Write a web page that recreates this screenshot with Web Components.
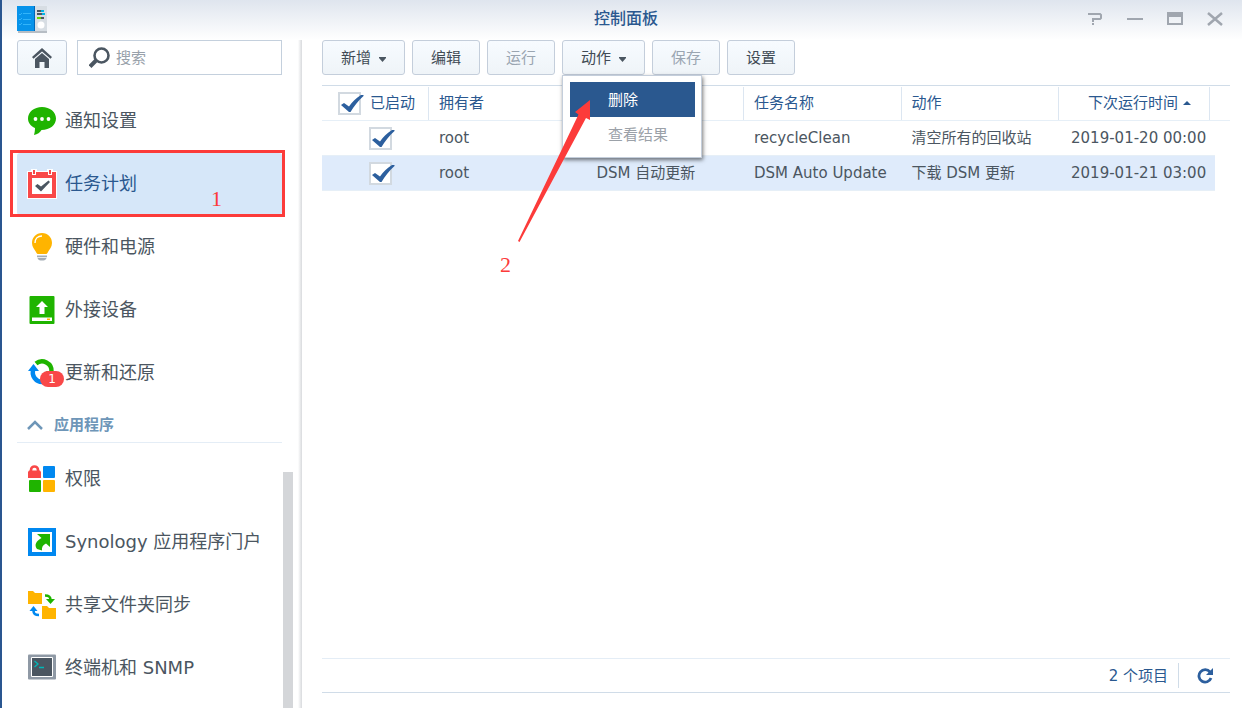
<!DOCTYPE html>
<html lang="zh-CN">
<head>
<meta charset="utf-8">
<title>控制面板</title>
<style>
html, body { margin: 0; min-height: 100%; }
body { background: #fff; color: #4b5661; font: 15px/20px "DejaVu Sans", "Noto Sans CJK SC", sans-serif; overflow: hidden; }
</style>
</head>
<body>
<cp-window heading="控制面板">
  <cp-sidebar slot="sidebar">
    <cp-nav-item icon="chat">通知设置</cp-nav-item>
    <cp-nav-item icon="calendar" selected mark="1">任务计划</cp-nav-item>
    <cp-nav-item icon="bulb">硬件和电源</cp-nav-item>
    <cp-nav-item icon="drive">外接设备</cp-nav-item>
    <cp-nav-item icon="update" badge="1">更新和还原</cp-nav-item>
    <cp-nav-section>应用程序</cp-nav-section>
    <cp-nav-item icon="apps">权限</cp-nav-item>
    <cp-nav-item icon="portal">Synology 应用程序门户</cp-nav-item>
    <cp-nav-item icon="sync">共享文件夹同步</cp-nav-item>
    <cp-nav-item icon="terminal">终端机和 SNMP</cp-nav-item>
  </cp-sidebar>
  <cp-toolbar>
    <cp-button caret>新增</cp-button>
    <cp-button>编辑</cp-button>
    <cp-button disabled>运行</cp-button>
    <cp-button caret>动作<cp-menu slot="menu"></cp-menu></cp-button>
    <cp-button disabled>保存</cp-button>
    <cp-button>设置</cp-button>
  </cp-toolbar>
  <cp-task-table></cp-task-table>
  <cp-status-bar>2 个项目</cp-status-bar>
</cp-window>
<script>
const ICONS = {
  chat: '<path fill="#1fb400" d="M14 0C6 0 0 5 0 11.500c0 4 2.500 7.500 7 9.500 0 3-.5 5-1 7 3.500-.5 6-2.500 7.500-5C22 23 28 18 28 11.500S22 0 14 0z"/><g fill="#fff"><circle cx="7.500" cy="12" r="1.900"/><circle cx="14" cy="12" r="1.900"/><circle cx="20.500" cy="12" r="1.900"/></g>',
  calendar: '<path fill="#fff" d="M-1 1h4v-2h6v2h10v-2h6v2h4v28H-1z"/><path fill="#f94848" d="M0 2h4v3h4V2h12v3h4V2h4v26H0z"/><path fill="#fff" d="M4 8h20v16H4z"/><path fill="#f94848" d="M5 0h2v4H5zM21 0h2v4h-2z"/><path fill="#4b5661" d="M7 16l2.500-2 3.500 2.500 7.500-6 1.500 1.500-9 9.500z"/>',
  bulb: '<path fill="#ffb400" d="M14 0C8 0 4 4.500 4 10c0 4 2.500 6.500 4 9 .7 1.500 1 2 2.500 2h7c1.500 0 1.800-.5 2.500-2 1.500-2.500 4-5 4-9 0-5.500-4-10-10-10z"/><path fill="none" stroke="#fff" stroke-width="1.400" d="M7 10c0-4 2.500-7 7-7"/><path fill="#a4adb5" d="M9 22.500h10v1.800H9zM9.500 25h9c-.5 1.500-1.500 2.500-3 2.500h-3c-1.500 0-2.500-1-3-2.500z"/>',
  drive: '<rect x="1.500" width="25" height="28" rx="1" fill="#1fb400"/><path fill="#fff" d="M14 5l6 6h-3.500v7h-5v-7H8zM4 21.500h20V25H4z"/><path fill="#ffb400" d="M19 22.500h3V24h-3z"/>',
  update: '<path fill="none" stroke="#0088f0" stroke-width="4.500" d="M5.500 10a9.500 9.500 0 0 0 9.500 13"/><path fill="#0088f0" d="M0 12l5.500-7 5.500 7z"/><path fill="none" stroke="#1fb400" stroke-width="4.500" d="M8 4.500a9.500 9.500 0 0 1 15.500 8"/><path fill="#1fb400" d="M18 12h10l-5 7z"/>',
  apps: '<path fill="none" stroke="#f94848" stroke-width="2.600" d="M3 8V5a3.500 3.500 0 0 1 7 0v3"/><path fill="#f94848" d="M1 5.500h11l1 1.500v6H0V7z"/><rect x="15" y="1" width="12" height="12" rx="1" fill="#0088f0"/><rect x="1" y="15" width="12" height="12" rx="1" fill="#1fb400"/><rect x="15" y="15" width="12" height="12" rx="1" fill="#ffb400"/>',
  portal: '<path fill="#fff" stroke="#0088f0" stroke-width="4" d="M2 2h24v24H2z"/><path fill="#1fb400" d="M9 6h13v13l-4-3.500c-3 1.500-4.500 3.500-4 7L9 21c-3-4-1-8 4.500-11z"/>',
  sync: '<path fill="#ffb400" d="M0 0h5l2 2h7v11H0zM14 15h5l2 2h7v11H14z"/><path fill="none" stroke="#1fb400" stroke-width="2.600" d="M17 4.500c4 0 5.500 1 5.500 4.500"/><path fill="#1fb400" d="M18 8h9l-4.500 5z"/><path fill="none" stroke="#0088f0" stroke-width="2.600" d="M11 24c-4 0-5.500-1-5.500-4.500"/><path fill="#0088f0" d="M1.500 20h8l-4-5z"/>',
  terminal: '<rect x="0" y="0.500" width="28" height="25" rx="1" fill="#8f99a5"/><path fill="#4b5661" stroke="#fff" d="M3.500 3.500h21v19h-21z"/><path fill="none" stroke="#00b8b8" stroke-width="1.300" d="M6.500 7l3.500 3-3.500 3M11 13.500h5"/>'
};

function define(name, css, html, setup) {
  const tpl = document.createElement('template');
  tpl.innerHTML = `<style>*{box-sizing:border-box}${css}</style>${html}`;
  customElements.define(name, class extends HTMLElement {
    constructor() {
      super();
      this.attachShadow({ mode: 'open' }).append(tpl.content.cloneNode(true));
    }
    connectedCallback() {
      if (setup && !this.ready) { this.ready = true; setup(this, this.shadowRoot); }
    }
  });
}

define('cp-window', `
  :host { display: flex; flex-direction: column; min-height: 100vh; box-sizing: border-box; border-left: 2px solid #2a5690; }
  header { display: grid; grid-template-columns: 1fr auto 1fr; align-items: center; height: 40px; padding: 0 7px 2px 15px;
    background: linear-gradient(#dfe5ee, #fff); }
  h1 { margin: 0; font-size: 16px; line-height: 24px; font-weight: 500; color: #2a588f; }
  nav { display: flex; justify-content: flex-end; }
  button { display: grid; place-items: center; width: 40px; height: 30px; padding: 0; border: 0; background: none; }
  .body { flex: 1; display: flex; }
  main { flex: 1; min-width: 0; display: flex; flex-direction: column; padding: 0 12px 15px 20px; }
  svg { display: block; fill: none; stroke: #a0a6af; stroke-width: 2; }
`, `
  <header>
    <svg width="30" height="27" stroke="none"><path stroke="none" fill="#b7bdc4" d="M1 2h29v25H1z"/><path stroke="none" fill="#0793ea" d="M0 0h17v25H0z"/><path stroke="none" fill="#0067b8" d="M17 0h1v25h-1z"/><path stroke="none" fill="#d7dde3" d="M18 0h12v25H18z"/>
      <path stroke="#32b4fa" stroke-width="1" d="M2 8l1 1 2-2M6 7.500h8M2 13l1 1 2-2M6 13.500h8M2 18l1 1 2-2M6 18.500h8"/><path stroke="#4b5661" d="M20 5h7M20 8h7M20 12h7"/><path stroke="#00b4e6" d="M24 5h3M25 8h3"/><path stroke="#6cd800" d="M20 12h4"/><circle cx="24" cy="19" r="3.500" fill="#fff" stroke="none"/></svg>
    <h1></h1>
    <nav>
      <button aria-label="帮助"><svg width="16" height="14"><path d="M1 2h12l1 1v3l-1 1H6v3M6 11v2"/></svg></button>
      <button aria-label="最小化"><svg width="16" height="14"><path d="M0 7h16"/></svg></button>
      <button aria-label="最大化"><svg width="16" height="14"><path d="M1 1h14v11H1zM1 3h14" /><path d="M1 4h14"/></svg></button>
      <button aria-label="关闭"><svg width="16" height="14"><path stroke-width="2.500" d="M1 1l14 12M15 1L1 13"/></svg></button>
    </nav>
  </header>
  <div class="body"><slot name="sidebar"></slot><main><slot></slot></main></div>
`, (el, root) => { root.querySelector('h1').textContent = el.getAttribute('heading'); });

define('cp-sidebar', `
  :host { display: flex; flex: none; width: 300px; box-sizing: border-box; padding-left: 15px;
    background: linear-gradient(90deg, transparent, #d8dadd) right / 4px 100% no-repeat; }
  .content { flex: none; width: 265px; }
  .search { display: flex; gap: 10px; margin-bottom: 15px; }
  .list { display: flex; flex-direction: column; gap: 1px; }
  button { width: 50px; height: 35px; padding: 0; display: grid; place-items: center; border: 1px solid #c4cedb; border-radius: 3px; background: linear-gradient(#f7fbff, #eff5f9); }
  label { flex: 1; display: flex; align-items: center; gap: 6px; min-width: 0; height: 35px; padding-left: 11px; border: 1px solid #c4d0dd; }
  input { flex: 1; min-width: 0; border: 0; padding: 0; outline: 0; font: inherit; background: none; color: inherit; }
  input::placeholder { color: #98a1aa; opacity: 1; }
  .rail { width: 10px; margin-left: 1px; display: flex; padding-top: 432px; }
  .thumb { flex: 1; background: #d4d6d9; }
`, `
  <div class="content">
    <div class="search">
      <button aria-label="主页"><svg width="20" height="20" fill="#4b5661"><path d="M10 0L0 9l1.500 1.800L10 3.500l8.500 7.300L20 9z"/><path d="M3 11l7-6 7 6v9h-4.500v-6h-5v6H3z"/></svg></button>
      <label><svg width="21" height="21" fill="none" stroke="#4b5661" role="img" aria-label="搜索"><circle cx="12.500" cy="8.500" r="7" stroke-width="2.600"/><path stroke-width="4" d="M7 13.500L1 19.500"/></svg><input type="text" placeholder="搜索"></label>
    </div>
    <div class="list"><slot></slot></div>
  </div>
  <div class="rail"><div class="thumb"></div></div>
`);

define('cp-nav-item', `
  :host { display: block; position: relative; font-size: 18px; line-height: 26px; }
  a { display: flex; align-items: center; gap: 9px; height: 62px; padding-left: 11px; border-radius: 3px; color: #4b5661; text-decoration: none; white-space: nowrap; }
  svg { display: block; overflow: visible; }
  .icon { position: relative; }
  .badge { position: absolute; left: 12px; top: 12px; width: 24px; height: 16px; border-radius: 8px; background: #f94848; color: #fff; font-size: 12px; line-height: 16px; text-align: center; }
  .mark { position: absolute; inset: -3px -3px -2px -7px; border: 3px solid #fc3b3a; color: #fc3b3a; font: 22px/24px "Liberation Serif", serif; text-align: right; padding: 34px 60px 0 0; pointer-events: none; }
  :host([selected]) a { background: #d6e7f9; color: #2a588f; }
`, `<a href="#"><span class="icon"><svg width="28" height="28"></svg></span><span><slot></slot></span></a>`,
(el, root) => {
  root.querySelector('svg').innerHTML = ICONS[el.getAttribute('icon')];
  for (const [name, parent] of [['badge', root.querySelector('.icon')], ['mark', root]]) {
    if (!el.hasAttribute(name)) continue;
    const s = document.createElement('span');
    s.className = name;
    s.textContent = el.getAttribute(name);
    parent.append(s);
  }
});

define('cp-nav-section', `
  :host { display: block; margin-bottom: 4px; }
  button { display: flex; align-items: center; gap: 11px; width: 100%; height: 38px; padding: 2px 0 0 10px; border: 0; border-bottom: 1px solid #e4edf6; background: none; font: inherit; font-weight: bold; color: #6e96b8; }
`, `<button aria-expanded="true"><svg width="16" height="10" fill="none" stroke="#6e96b8" stroke-width="2.500"><path d="M1 9l7-7 7 7"/></svg><span><slot></slot></span></button>`);

define('cp-toolbar', `:host { display: flex; gap: 7px; margin-bottom: 10px; }`, `<slot></slot>`);

define('cp-button', `
  :host { display: block; position: relative; }
  button { display: flex; align-items: center; gap: 8px; height: 35px; padding: 0 18px; border: 1px solid #c4cedb; border-radius: 3px; background: linear-gradient(#f7fbff, #eff4f8); font: inherit; color: #414b55; white-space: nowrap; }
  button:disabled { color: #9aa5b1; }
  svg { display: none; margin-top: 4px; }
  :host([caret]) svg { display: block; }
`, `<button><span><slot></slot></span><svg width="7" height="5" fill="#4b5661"><path d="M0 0h7v1L3.500 5 0 1z"/></svg></button><slot name="menu"></slot>`,
(el, root) => { root.querySelector('button').disabled = el.hasAttribute('disabled'); });

define('cp-menu', `
  :host { position: absolute; z-index: 2; left: 0; top: 35px; width: 140px; box-sizing: border-box; padding: 6px 6px 5px 7px; border: 1px solid #c4cedb; background: #fff; box-shadow: 1px 2px 4px #0008; }
  .items { display: flex; flex-direction: column; }
  button { height: 35px; padding: 0 0 0 38px; border: 0; background: none; text-align: left; font: inherit; color: #9ba1a8; }
  .active { background: #2a588f; color: #fff; }
  .pointer { position: absolute; left: -63px; top: 24px; width: 92px; color: #fc3b3a; font: 22px/24px "Liberation Serif", serif; pointer-events: none; }
  svg { display: block; margin-left: 18px; }
  .pointer span { display: block; margin-top: 10px; }
`, `
  <div class="items" role="menu"><button class="active" role="menuitem">删除</button><button role="menuitem" disabled>查看结果</button></div>
  <div class="pointer"><svg width="73" height="143" fill="#fc3b3a"><path d="M72 0v20l-4-2L1.500 142 0 141 60.500 14.500 57 12z"/></svg><span>2</span></div>
`);

define('cp-check', `
  :host { display: inline-block; vertical-align: middle; }
  label { display: flex; align-items: center; gap: 9px; }
  .box { position: relative; width: 23px; height: 23px; }
  input { appearance: none; display: block; width: 23px; height: 23px; margin: 0; border: 2px solid #d2d9e0; background: #fff; }
  svg { position: absolute; left: 3px; top: 3px; pointer-events: none; }
  input:not(:checked) + svg { display: none; }
`, `<label><span class="box"><input type="checkbox" checked><svg width="23" height="18" fill="#2c5f9e"><path d="M0 10l3-2 5 3.500C11 7 15 3 20 0h2.500v1C17 6 13 11 9.500 17H8z"/></svg></span><slot></slot></label>`,
(el, root) => { const l = el.getAttribute('label'); if (l) root.querySelector('input').setAttribute('aria-label', l); });

define('cp-task-table', `
  :host { display: block; flex: 1; }
  table { width: 100%; table-layout: fixed; border-collapse: separate; border-spacing: 0; border-top: 1px solid #d0dce8; }
  .enabled { width: 107px; } .next { width: 151px; } .fill { width: 5px; } .edge { width: 15px; }
  th, td { height: 35px; padding: 0 0 0 10px; text-align: left; font-weight: 400; white-space: nowrap; border-bottom: 1px solid #e6eff7; }
  th { color: #2a588f; background: linear-gradient(#dce6f1, #dce6f1) right center / 1px 33px no-repeat; }
  th:first-child { padding-left: 16px; }
  th:nth-child(6) { text-align: center; }
  th:last-child { background: none; }
  td:first-child { padding-left: 47px; }
  td:nth-child(6) { padding-left: 12px; }
  td:last-child { border: 0; padding: 0; }
  td:nth-child(7) { padding: 0; }
  .selected td:not(:last-child) { background: #dfebfb; }
  svg { margin-left: 5px; vertical-align: 3px; }
`, `
  <table>
    <colgroup><col class="enabled"><col><col><col><col><col class="next"><col class="fill"><col class="edge"></colgroup>
    <thead><tr><th><cp-check>已启动</cp-check></th><th>拥有者</th><th></th><th>任务名称</th><th>动作</th><th>下次运行时间<svg width="8" height="4" fill="#2a588f"><path d="M0 4h8L4 0z"/></svg></th><th colspan="2"></th></tr></thead>
    <tbody>
      <tr><td><cp-check label="已启动"></cp-check></td><td>root</td><td></td><td>recycleClean</td><td>清空所有的回收站</td><td>2019-01-20 00:00</td><td></td><td></td></tr>
      <tr class="selected"><td><cp-check label="已启动"></cp-check></td><td>root</td><td>DSM 自动更新</td><td>DSM Auto Update</td><td>下载 DSM 更新</td><td>2019-01-21 03:00</td><td></td><td></td></tr>
    </tbody>
  </table>
`);

define('cp-status-bar', `
  :host { display: flex; justify-content: flex-end; align-items: center; height: 35px; box-sizing: border-box; border-top: 1px solid #e4edf6; border-bottom: 1px solid #d0dce8; color: #2a588f; }
  button { display: grid; place-items: center; width: 52px; height: 25px; margin-left: 10px; padding: 0; border: 0; border-left: 1px solid #d0dce8; background: none; }
`, `<span><slot></slot></span><button aria-label="刷新"><svg width="16" height="16" fill="none" stroke="#2c5f9e" stroke-width="2.800"><path d="M13 4A6.200 6.200 0 1 0 14 10"/><path fill="#2c5f9e" stroke="none" d="M16 0v7H9z"/></svg></button>`);
</script>
</body>
</html>
